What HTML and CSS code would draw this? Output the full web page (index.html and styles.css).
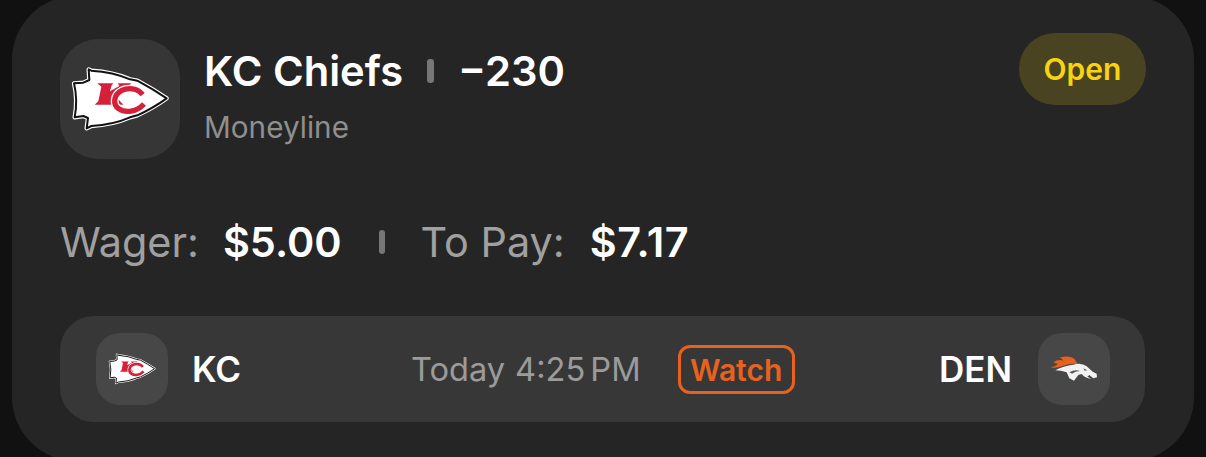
FILE: index.html
```html
<!DOCTYPE html>
<html lang="en">
<head>
  <meta charset="UTF-8" />
  <title>Open bet</title>
  <link rel="stylesheet" href="styles.css">
</head>
<body>

  <svg class="defs" width="0" height="0">
    <symbol id="chiefs" viewBox="30 27 360 360">
      <path class="arrow-rim" d="M116 118 L124 122 Q190 126 240 148 L262 152 Q310 178 350 205 Q310 234 262 256 L240 262 Q190 284 124 288 L110 295 L114 264 L100 258 L74 262 Q84 210 72 160 L100 158 L118 150 Z"/>
      <path class="arrow-line" d="M116 118 L124 122 Q190 126 240 148 L262 152 Q310 178 350 205 Q310 234 262 256 L240 262 Q190 284 124 288 L110 295 L114 264 L100 258 L74 262 Q84 210 72 160 L100 158 L118 150 Z"/>
      <path class="kc-k" d="M142 160 H190 L184 168 L180 184 L208 168 L204 160 H244 L236 169 L196 192 L210 214 L220 224 H134 L145 214 L154 170 Z"/>
      <path class="kc-gap" d="M278 194 C262 174 234 172 214 182 C190 195 188 224 206 236 C226 250 260 246 282 222"/>
      <path class="kc-c" d="M278 194 C262 174 234 172 214 182 C190 195 188 224 206 236 C226 250 260 246 282 222"/>
    </symbol>
    <symbol id="broncos" viewBox="24 24 216 216">
      <path class="mane" d="M62 128 Q76 124 84 117 Q78 115 70 112 Q84 102 100 107 Q96 101 90 97 Q120 90 134 103 L143 117 Q118 115 100 122 Q82 130 62 128 Z"/>
      <path class="head" d="M76 136 Q100 122 130 119 Q154 112 170 124 L188 140 L200 146 L201 157 L190 160 L178 150 L172 155 L184 161 Q164 160 156 148 Q146 146 142 154 L132 167 L118 160 L110 142 Q92 136 76 136 Z"/>
      <path class="head-mark" d="M118 142 Q134 132 150 138 Q136 138 126 146 Z M160 130 L172 136 L164 137 Z"/>
    </symbol>
  </svg>

  <div class="card">
    <div class="bet-head">
      <div class="logo-box">
        <svg class="logo-big"><use href="#chiefs"/></svg>
      </div>
      <div class="bet-info">
        <div class="bet-title">
          <span>KC Chiefs</span>
          <i class="sep"></i>
          <span>−230</span>
        </div>
        <div class="bet-type">Moneyline</div>
      </div>
      <div class="status">Open</div>
    </div>

    <div class="amounts">
      <span class="amount-label">Wager:</span>
      <span class="amount-value">$5.00</span>
      <i class="sep"></i>
      <span class="amount-label">To Pay:</span>
      <span class="amount-value pay">$7.17</span>
    </div>

    <div class="game">
      <div class="team">
        <div class="team-icon"><svg class="logo-kc"><use href="#chiefs"/></svg></div>
        <span class="team-name">KC</span>
      </div>
      <div class="game-mid">
        <span class="game-time"><span>Today</span><span>4:25 PM</span></span>
        <span class="watch">Watch</span>
      </div>
      <div class="team team-right">
        <span class="team-name">DEN</span>
        <div class="team-icon"><svg class="logo-den"><use href="#broncos"/></svg></div>
      </div>
    </div>
  </div>

</body>
</html>
```

FILE: styles.css
```css
body {
  margin: 0;
  height: 457px;
  background: #111111;
  color: #ffffff;
  font-family: 'Inter', sans-serif;
  overflow: hidden;
}

.defs {
  position: absolute;
}

.card {
  height: 465px;
  margin: -4px 12px 0;
  padding: 37px 49px 0 48px;
  box-sizing: border-box;
  background: #252525;
  border-radius: 64px;
}

.bet-head {
  display: flex;
  align-items: flex-start;
}

.logo-box {
  width: 120px;
  height: 120px;
  margin-top: 6px;
  border-radius: 38px;
  background: #363636;
}

.logo-big {
  display: block;
  width: 120px;
  height: 120px;
}

.bet-info {
  margin-left: 24px;
  padding-top: 12px;
  flex: 1;
}

.bet-title {
  display: flex;
  align-items: center;
  gap: 24px;
  font-size: 41.7px;
  line-height: 52px;
  font-weight: 600;
}

.sep {
  display: block;
  width: 7px;
  height: 24px;
  border-radius: 3px;
  background: #767676;
}

.bet-type {
  margin-top: 12px;
  font-size: 29.7px;
  line-height: 37px;
  color: #8f8f8f;
}

.status {
  width: 127px;
  height: 72px;
  margin-right: -1px;
  line-height: 73px;
  text-align: center;
  border-radius: 36px;
  background: #4a4321;
  color: #f7d312;
  font-size: 30px;
  font-weight: 600;
}

.amounts {
  display: flex;
  align-items: center;
  margin-top: 53px;
  height: 60px;
  font-size: 41.4px;
}

.amount-label {
  color: #a0a0a0;
}

.amount-value {
  margin-left: 24px;
  font-weight: 600;
}

.amount-value.pay {
  margin-left: 25px;
  letter-spacing: 0.6px;
}

.amounts .sep {
  width: 6px;
  margin: 0 36px 0 37px;
}

.game {
  display: grid;
  grid-template-columns: 315px auto 1fr;
  align-items: center;
  height: 106px;
  margin-top: 44px;
  padding: 0 35px 0 36px;
  border-radius: 34px;
  background: #373737;
}

.team {
  display: flex;
  align-items: center;
  gap: 24px;
}

.team-right {
  justify-self: end;
  gap: 26px;
}

.team-icon {
  display: flex;
  align-items: center;
  justify-content: center;
  width: 72px;
  height: 72px;
  border-radius: 24px;
  background: #474747;
}

.logo-kc {
  width: 58px;
  height: 58px;
}

.logo-den {
  width: 72px;
  height: 72px;
}

.team-name {
  font-size: 35px;
  font-weight: 600;
}

.game-time {
  display: flex;
  gap: 10px;
  font-size: 32.6px;
  word-spacing: -4px;
  color: #9b9b9b;
}

.game-mid {
  display: flex;
  align-items: center;
  gap: 37px;
}

.watch {
  width: 117px;
  height: 49px;
  line-height: 45px;
  box-sizing: border-box;
  text-align: center;
  border: 3px solid #e9611f;
  border-radius: 12px;
  color: #e9611f;
  font-size: 30px;
  font-weight: 600;
}

/* logo parts */
.arrow-rim {
  fill: #ffffff;
  stroke: #ffffff;
  stroke-width: 13;
  stroke-linejoin: round;
}

.arrow-line {
  fill: #ffffff;
  stroke: #111111;
  stroke-width: 6;
  stroke-linejoin: round;
}

.kc-k {
  fill: #d5203a;
}

.kc-gap {
  fill: none;
  stroke: #ffffff;
  stroke-width: 24;
}

.kc-c {
  fill: none;
  stroke: #d5203a;
  stroke-width: 16;
}

.mane {
  fill: #e9611f;
}

.head {
  fill: #f2f2f2;
}

.head-mark {
  fill: #5a5a5a;
}
```
